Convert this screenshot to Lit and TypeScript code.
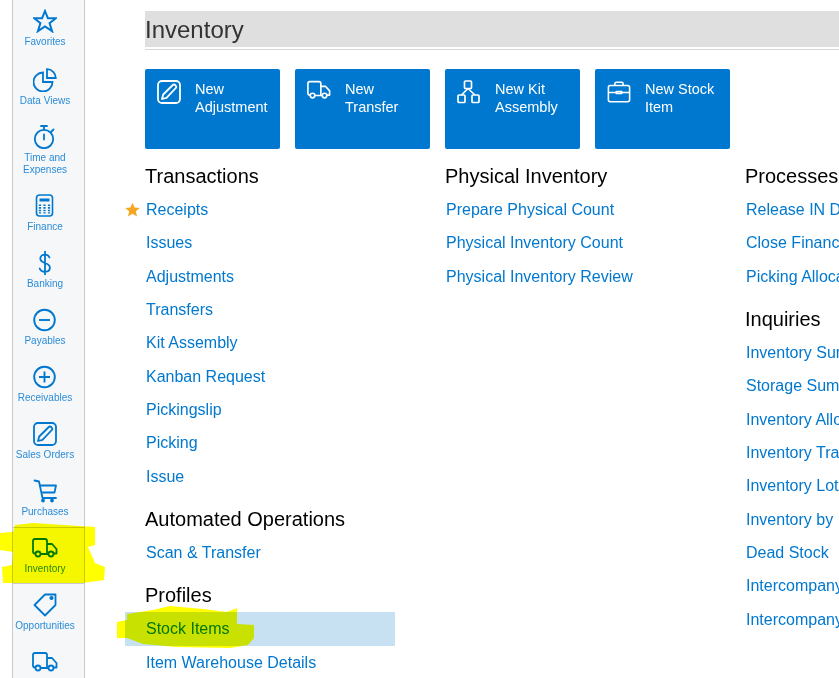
import { LitElement, html, css } from 'lit';
import { customElement } from 'lit/decorators.js';

const icons: Record<string, unknown> = {
  star: html`<svg width="24" height="24" viewBox="0 0 24 24" fill="none" stroke="currentColor" stroke-width="2"><path d="M12 2l2.900 7.200h8l-6.300 5 2.500 8-7.100-4.800-7.100 4.800 2.500-8-6.300-5h8z"/></svg>`,
  pie: html`<svg width="24" height="24" viewBox="0 0 24 24" fill="none" stroke="currentColor" stroke-width="1.8"><path d="M10 4.500A9.500 9.500 0 1 0 19.500 14H10z"/><path d="M14 1.200A8.800 8.800 0 0 1 22.800 10H14z"/></svg>`,
  timer: html`<svg width="24" height="24" viewBox="0 0 24 24" fill="none" stroke="currentColor" stroke-width="1.8" stroke-linecap="round"><circle cx="11" cy="14" r="9.200"/><path d="M11 4.500V1.500M8 1h6M11 9.500v5M18 7l2.500-2.500"/></svg>`,
  calc: html`<svg width="24" height="24" viewBox="0 0 24 24" fill="none" stroke="currentColor" stroke-width="1.6"><rect x="3.500" y="1" width="16" height="21" rx="3"/><path d="M6.500 4.500h10v3h-10z" fill="currentColor" stroke="none"/><path d="M7 10.500v9M11.500 10.500v9M16 10.500v9" stroke-width="2.200" stroke-dasharray="1.600 1"/></svg>`,
  dollar: html`<svg width="24" height="24" viewBox="0 0 24 24" fill="none" stroke="currentColor" stroke-width="1.800" stroke-linecap="round"><path d="M16.500 6.500C15.700 4.400 14 3.600 12 3.600 9.300 3.600 7.300 5 7.300 7.500c0 3 2.800 3.700 4.700 4.500 2.400.8 4.900 1.800 4.900 4.800 0 2.400-2 4-4.900 4-2.400 0-4.400-1-5.300-3.300M12 .5v23"/></svg>`,
  minus: html`<svg width="24" height="24" viewBox="0 0 24 24" fill="none" stroke="currentColor" stroke-width="1.900"><circle cx="11.500" cy="12" r="10.300"/><path d="M6 12h11"/></svg>`,
  plus: html`<svg width="24" height="24" viewBox="0 0 24 24" fill="none" stroke="currentColor" stroke-width="1.900"><circle cx="11.500" cy="12" r="10.300"/><path d="M6 12h11M11.500 6.500v11"/></svg>`,
  edit: html`<svg width="24" height="24" viewBox="0 0 24 24" fill="none" stroke="currentColor" stroke-width="1.800" stroke-linejoin="round"><rect x="1" y="1" width="22" height="22" rx="4"/><path d="M5 19l1.200-4.500L15.800 5q1.200-1.200 2.700.3t.3 2.700L9.500 17.800z"/></svg>`,
  cart: html`<svg width="24" height="24" viewBox="0 0 24 24" fill="none" stroke="currentColor" stroke-width="1.800" stroke-linejoin="round" stroke-linecap="round"><path d="M1.500 1.500l4.500 1 3.500 16.500h13.500M7 6.500h16l-1.500 7H9"/><circle cx="10" cy="21.500" r="1" fill="currentColor"/><circle cx="19" cy="21.500" r="1" fill="currentColor"/></svg>`,
  truck: html`<svg width="26" height="20" viewBox="0 0 26 20" fill="none" stroke="currentColor" stroke-width="1.800" stroke-linejoin="round"><path d="M3.500 15.500H3q-2 0-2-2V3q0-2 2-2h10q2 0 2 2v12.500M8.500 16h8M15 6h5l4.500 5v4.500H21.500"/><circle cx="6" cy="16" r="2.500"/><circle cx="19" cy="16" r="2.500"/></svg>`,
  tag: html`<svg width="24" height="24" viewBox="0 0 24 24" fill="none" stroke="currentColor" stroke-width="1.800" stroke-linejoin="round"><path d="M12 1.500h10.500V12L12 22.500 1.500 12z"/><circle cx="18.500" cy="5" r="1.200" fill="currentColor"/></svg>`,
  kit: html`<svg width="24" height="24" viewBox="0 0 24 24" fill="none" stroke="currentColor" stroke-width="1.700" stroke-linejoin="round"><rect x="7.500" y="1" width="7" height="7.500" rx="1"/><rect x="1" y="15" width="7" height="7.500" rx="1"/><rect x="15" y="15" width="7" height="7.500" rx="1"/><path d="M11 8.500L4.500 15M11 8.500l7 6.500"/></svg>`,
  case: html`<svg width="26" height="24" viewBox="0 0 26 24" fill="none" stroke="currentColor" stroke-width="1.700" stroke-linejoin="round"><rect x="1.500" y="5" width="23" height="17.500" rx="2"/><path d="M8.500 5V3q0-1.500 1.500-1.500h6Q17.500 1.500 17.500 3v2M1.500 12.500h8.500M16 12.500h8.500M10 11.500h6v2h-6z"/></svg>`,
};

const navItems = [
  ['star', 'Favorites'], ['pie', 'Data Views'], ['timer', 'Time and Expenses'], ['calc', 'Finance'],
  ['dollar', 'Banking'], ['minus', 'Payables'], ['plus', 'Receivables'], ['edit', 'Sales Orders'],
  ['cart', 'Purchases'], ['truck', 'Inventory'], ['tag', 'Opportunities'], ['truck', ''],
];

const tiles = [
  ['edit', 'New', 'Adjustment'], ['truck', 'New', 'Transfer'],
  ['kit', 'New Kit', 'Assembly'], ['case', 'New Stock', 'Item'],
];

const columns = [
  [
    ['Transactions', ['Receipts', 'Issues', 'Adjustments', 'Transfers', 'Kit Assembly', 'Kanban Request', 'Pickingslip', 'Picking', 'Issue']],
    ['Automated Operations', ['Scan & Transfer']],
    ['Profiles', ['Stock Items', 'Item Warehouse Details']],
  ],
  [
    ['Physical Inventory', ['Prepare Physical Count', 'Physical Inventory Count', 'Physical Inventory Review']],
  ],
  [
    ['Processes', ['Release IN Documents', 'Close Financial Periods', 'Picking Allocations']],
    ['Inquiries', ['Inventory Summary', 'Storage Summary', 'Inventory Allocation Details', 'Inventory Transaction History', 'Inventory Lot/Serial History', 'Inventory by', 'Dead Stock', 'Intercompany Sales', 'Intercompany Returns']],
  ],
] as [string, string[]][][];

@customElement('app-root')
export class AppRoot extends LitElement {
  static styles = css`
    :host {
      display: block;
      position: relative;
      height: 100vh;
      overflow: hidden;
      background: #fff;
      font-family: "Liberation Sans", Arial, sans-serif;
    }

    .page {
      display: flex;
      height: 100%;
      padding-left: 12px;
    }

    .rail {
      flex: none;
      width: 73px;
      box-sizing: border-box;
      background: #f5f7f9;
      border-left: 1px solid #c9c9c9;
      border-right: 1px solid #c9c9c9;
      overflow: hidden;
    }

    .nav {
      display: flex;
      flex-direction: column;
      align-items: center;
      padding: 9px 7px 9px 0;
      color: #0078cf;
      font-size: 10px;
      line-height: 12px;
      text-align: center;
    }

    .nav.first { margin-bottom: 2px; }

    .nav.active {
      padding: 8px 7px 8px 0;
      border-top: 1px solid #c9c9c9;
      border-bottom: 1px solid #c9c9c9;
    }

    .nav .icon {
      display: flex;
      align-items: center;
      justify-content: center;
      height: 24px;
      margin-bottom: 3px;
    }

    .nav .label { color: #2b8cd8; }

    .main {
      flex: 1;
      min-width: 0;
      margin-left: 60px;
      padding-top: 11px;
    }

    .title {
      height: 36px;
      line-height: 38px;
      font-size: 24px;
      color: #333;
      background: #dfdfdf;
    }

    .rule {
      height: 1px;
      margin-top: 2px;
      background: #d6d6d6;
    }

    .tiles {
      display: flex;
      gap: 15px;
      margin-top: 19px;
    }

    .tile {
      flex: none;
      display: flex;
      width: 135px;
      height: 80px;
      box-sizing: border-box;
      padding: 11px 12px;
      gap: 14px;
      background: #0078cf;
      border-radius: 2px;
      color: #fff;
      font-size: 14.5px;
      line-height: 18px;
    }

    .tile .icon {
      flex: none;
      display: flex;
      justify-content: center;
      width: 24px;
    }

    .columns {
      display: grid;
      grid-template-columns: 300px 300px 300px;
      padding-top: 1px;
    }

    h2 {
      margin: 9.67px 0 0;
      height: 33.33px;
      line-height: 33.33px;
      font-size: 20px;
      font-weight: 400;
      color: #000;
      white-space: nowrap;
    }

    .link {
      position: relative;
      height: 33.33px;
      line-height: 33.33px;
      padding-left: 1px;
      font-size: 16px;
      color: #0078cf;
      white-space: nowrap;
    }

    .link.selected {
      width: 249px;
      margin-left: -20px;
      padding-left: 21px;
      background: #c8e1f2;
    }

    .fav {
      position: absolute;
      left: -20px;
      top: 9px;
      color: #f5a623;
    }

    .marker {
      position: absolute;
      inset: 0;
      width: 100%;
      height: 100%;
      mix-blend-mode: multiply;
      pointer-events: none;
    }
  `;

  private renderSection([name, links]: [string, string[]]) {
    return html`
      <h2>${name}</h2>
      ${links.map((l) => html`
        <div class="link ${l === 'Stock Items' ? 'selected' : ''}">
          ${l === 'Receipts' ? html`<svg class="fav" width="15" height="15" viewBox="0 0 24 24" fill="currentColor"><path d="M12 1l3.400 7.600 8.200.8-6.200 5.500 1.800 8.100-7.200-4.200L4.800 23l1.800-8.100L.4 9.400l8.200-.8z"/></svg>` : ''}${l}
        </div>
      `)}
    `;
  }

  render() {
    return html`
      <div class="page">
        <nav class="rail">
          ${navItems.map(([icon, label], i) => html`
            <div class="nav ${i === 0 ? 'first' : ''} ${label === 'Inventory' ? 'active' : ''}">
              <span class="icon">${icons[icon]}</span>
              <span class="label">${label}</span>
            </div>
          `)}
        </nav>
        <div class="main">
          <div class="title">Inventory</div>
          <div class="rule"></div>
          <div class="tiles">
            ${tiles.map(([icon, a, b]) => html`
              <div class="tile">
                <span class="icon">${icons[icon]}</span>
                <span>${a}<br />${b}</span>
              </div>
            `)}
          </div>
          <div class="columns">
            ${columns.map((col) => html`<div>${col.map((s) => this.renderSection(s))}</div>`)}
          </div>
        </div>
      </div>
      <!-- highlighter scribbles drawn on top of the screenshot -->
      <svg class="marker" viewBox="0 0 839 678">
        <path fill="#ff0" d="M15 525L33 523L95 527L95 545L88 547L95 563L105 567L104 580L83 583L3 583L2 567L12 565L13 552L0 550L0 533L13 532Z"/>
        <path fill="#ff0" d="M127 614L153 610L170 606L203 609L227 612L237 608L237 624L254 625L254 638L248 645L230 648L177 647L143 644L127 638L117 638L117 622L127 620Z"/>
      </svg>
    `;
  }
}
